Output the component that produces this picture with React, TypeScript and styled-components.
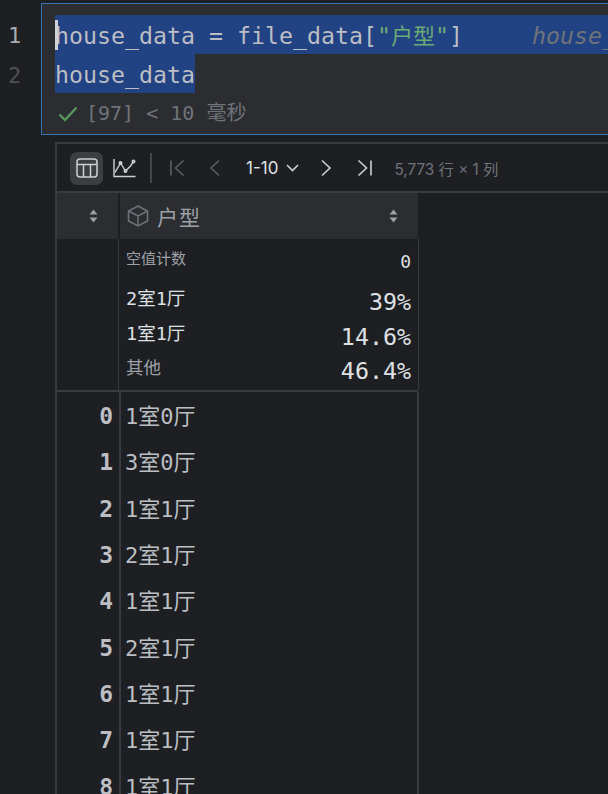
import * as React from 'react';
import styled, { createGlobalStyle } from 'styled-components';

const MONO = `"DejaVu Sans Mono", "Noto Sans CJK SC", monospace`;
const UI = `Inter, "Noto Sans CJK SC", sans-serif`;

const GlobalStyle = createGlobalStyle`
  html, body {
    margin: 0;
    height: 794px;
    overflow: hidden;
    background: #1e1f22;
  }
`;

const Page = styled.div`
  width: 608px;
  height: 794px;
  overflow: hidden;
  padding-top: 3px;
  box-sizing: border-box;
  background: #1e1f22;
`;

const CellRow = styled.div`
  display: flex;
  height: 132px;
`;

const Gutter = styled.div`
  width: 41px;
  padding-top: 13px;
  box-sizing: border-box;
`;

const LineNo = styled.div<{ $active?: boolean }>`
  height: 39.5px;
  padding-left: 8px;
  font: 22px/39px ${MONO};
  color: ${p => (p.$active ? '#a8abb2' : '#4e5157')};
`;

const Cell = styled.div`
  flex: 1;
  min-width: 0;
  background: #2b2d30;
  border: 1px solid #3574b0;
  border-right: none;
  padding-top: 11px;
  box-sizing: border-box;
  overflow: hidden;
`;

const CodeLine = styled.div<{ $fill?: boolean }>`
  position: relative;
  display: block;
  width: ${p => (p.$fill ? 'auto' : '140px')};
  height: 39px;
  margin-left: 13px;
  background: #214283;
  font: 23.25px/42px ${MONO};
  color: #bcbec4;
  white-space: pre;
`;

const Caret = styled.span`
  position: absolute;
  left: 0;
  top: 5px;
  width: 3px;
  height: 30px;
  background: #ced0d6;
`;

const Str = styled.span`
  color: #6aab73;
`;

const Cjk = styled.span`
  font-size: 22px;
`;

const Hint = styled.span`
  margin-left: 69px;
  color: #6f737a;
  font-style: italic;
`;

const Status = styled.div`
  display: flex;
  align-items: center;
  height: 39px;
  padding: 2px 0 0 16px;
  box-sizing: border-box;
  gap: 8px;
  font: 20px/41px ${MONO};
  color: #6f737a;
  white-space: pre;
`;

const Output = styled.div`
  margin: 7px 0 0 55px;
  height: 652px;
  border-left: 2px solid #393b40;
  overflow: hidden;
`;

const Toolbar = styled.div`
  display: flex;
  align-items: center;
  height: 46px;
  padding: 1px 0 0 13px;
  border-top: 2px solid #393b40;
  border-bottom: 2px solid #393b40;
`;

const ToolButton = styled.div<{ $active?: boolean; $ml?: number; $w?: number }>`
  display: flex;
  align-items: center;
  justify-content: center;
  flex: none;
  width: ${p => p.$w ?? 33}px;
  height: 33px;
  margin-left: ${p => p.$ml ?? 0}px;
  border-radius: 7px;
  background: ${p => (p.$active ? '#3c3e41' : 'transparent')};
`;

const Divider = styled.div`
  width: 2px;
  height: 30px;
  margin-left: 9px;
  background: #43454a;
`;

const PageLabel = styled.span`
  margin-left: 15px;
  font: 17px ${UI};
  color: #dfe1e5;
`;

const RowCount = styled.span`
  margin-left: 13px;
  font: 15.3px ${UI};
  color: #6f737a;
  white-space: pre;
`;

const TableWrap = styled.div`
  width: 361px;
`;

const HeaderRow = styled.div`
  display: flex;
  justify-content: space-between;
  height: 46px;
`;

const IndexHead = styled.div`
  display: flex;
  align-items: center;
  justify-content: center;
  width: 61px;
  flex: none;
  padding-left: 11px;
  box-sizing: border-box;
  background: #2b2d30;
`;

const ColumnHead = styled.div`
  display: flex;
  align-items: center;
  width: 298px;
  flex: none;
  padding: 0 20px 0 7px;
  box-sizing: border-box;
  background: #2b2d30;
`;

const ColumnName = styled.span`
  flex: 1;
  margin-left: 8px;
  font: 21px/46px "Noto Sans CJK SC", sans-serif;
  letter-spacing: 1px;
  color: #9da0a8;
`;

const StatsRow = styled.div`
  display: flex;
  height: 153px;
  border-bottom: 2px solid #393b40;
  box-sizing: border-box;
`;

const StatsIndex = styled.div`
  width: 61px;
  flex: none;
  border-right: 1px solid #393b40;
`;

const StatsBody = styled.div`
  width: 299px;
  flex: none;
  margin-left: 1px;
  padding: 6px 7px 0 6px;
  box-sizing: border-box;
  border-right: 1px solid #393b40;
`;

const StatLine = styled.div<{ $h: number }>`
  display: flex;
  justify-content: space-between;
  align-items: center;
  height: ${p => p.$h}px;
`;

// $dy nudges a text up or down inside its centred line
const StatName = styled.span<{ $muted?: boolean; $size: number; $dy: number }>`
  margin-top: ${p => p.$dy * 2}px;
  font: ${p => p.$size}px ${MONO};
  color: ${p => (p.$muted ? '#9da0a8' : '#dfe1e5')};
`;

const StatValue = styled.span<{ $size: number; $dy: number }>`
  margin-top: ${p => p.$dy * 2}px;
  font: ${p => p.$size}px ${MONO};
  color: #dfe1e5;
`;

const DataRow = styled.div`
  display: flex;
  height: 46.33px;
`;

const IndexCell = styled.div`
  width: 56px;
  padding-right: 6px;
  flex: none;
  text-align: right;
  font: bold 23px/48px ${MONO};
  color: #bcbec4;
`;

const ValueCell = styled.div`
  width: 300px;
  flex: none;
  padding-left: 4px;
  box-sizing: border-box;
  border-left: 2px solid #393b40;
  border-right: 2px solid #393b40;
  font: 22px/49px ${MONO};
  color: #bcbec4;
`;

const SortIcon = () => (
  <svg width="9" height="14" viewBox="0 0 9 14">
    <path d="M4.5 0.5 L8.5 5.5 H0.5 Z" fill="#9da0a8" />
    <path d="M4.5 13.5 L8.5 8.5 H0.5 Z" fill="#9da0a8" />
  </svg>
);

const Stroke = ({ w, h, d, color = '#9da0a8', sw = 1.6 }: { w: number; h: number; d: string; color?: string; sw?: number }) => (
  <svg width={w} height={h} viewBox={`0 0 ${w} ${h}`} fill="none" stroke={color} strokeWidth={sw}>
    <path d={d} />
  </svg>
);

const rows = ['1室0厅', '3室0厅', '1室1厅', '2室1厅', '1室1厅', '2室1厅', '1室1厅', '1室1厅', '1室1厅'];

export default function App() {
  return (
    <Page>
      <GlobalStyle />
      <CellRow>
        <Gutter>
          <LineNo $active>1</LineNo>
          <LineNo>2</LineNo>
        </Gutter>
        <Cell>
          <CodeLine $fill>
            <Caret />
            house_data = file_data[<Str>"<Cjk>户型</Cjk>"</Str>]<Hint>house_data</Hint>
          </CodeLine>
          <CodeLine>house_data</CodeLine>
          <Status>
            <Stroke w={20} h={18} d="M1.5 9.5 L7 15 L18.5 2.5" color="#57965c" sw={2.4} />
            <span>[97] &lt; 10 毫秒</span>
          </Status>
        </Cell>
      </CellRow>
      <Output>
        <Toolbar>
          <ToolButton $active>
            <svg width="22" height="20" viewBox="0 0 22 20" fill="none" stroke="#ced0d6" strokeWidth="1.5">
              <rect x="1" y="1" width="20" height="18" rx="3" />
              <path d="M1 6.5 H21 M7.5 6.5 V19 M14.5 6.5 V19" />
            </svg>
          </ToolButton>
          <ToolButton $ml={5}>
            <svg width="23" height="20" viewBox="0 0 23 20" fill="none" stroke="#ced0d6" strokeWidth="1.4">
              <path d="M1 1 V18.5 H22.5" />
              <path d="M2 14.5 L7.5 5 L12.5 13 L17.5 8 L20.5 3.5" />
              <circle cx="7.5" cy="5" r="1.3" />
              <circle cx="12.5" cy="13" r="1.3" />
              <circle cx="20.5" cy="3.5" r="1.3" />
            </svg>
          </ToolButton>
          <Divider />
          <ToolButton $ml={8}>
            <Stroke w={16} h={18} d="M2 1.5 V16.5 M14.5 1.5 L6.5 9 L14.5 16.5" color="#5a5d63" />
          </ToolButton>
          <ToolButton $ml={5}>
            <Stroke w={12} h={18} d="M10 1.5 L2 9 L10 16.5" color="#5a5d63" />
          </ToolButton>
          <PageLabel>1-10</PageLabel>
          <ToolButton $w={14} $ml={7.5}>
            <Stroke w={13} h={8} d="M1 1 L6.5 6.5 L12 1" color="#ced0d6" />
          </ToolButton>
          <ToolButton $ml={10}>
            <Stroke w={12} h={18} d="M2 1.5 L10 9 L2 16.5" color="#ced0d6" />
          </ToolButton>
          <ToolButton $ml={5.5}>
            <Stroke w={16} h={18} d="M14 1.5 V16.5 M1.5 1.5 L9.5 9 L1.5 16.5" color="#ced0d6" />
          </ToolButton>
          <RowCount>5,773 行 × 1 列</RowCount>
        </Toolbar>
        <TableWrap>
          <HeaderRow>
            <IndexHead>
              <SortIcon />
            </IndexHead>
            <ColumnHead>
              <svg width="22" height="22" viewBox="0 0 22 22" fill="none" stroke="#6f737a" strokeWidth="1.5">
                <path d="M11 1 L20.5 6 V16 L11 21 L1.5 16 V6 Z M1.5 6 L11 11 L20.5 6 M11 11 V21" />
              </svg>
              <ColumnName>户型</ColumnName>
              <SortIcon />
            </ColumnHead>
          </HeaderRow>
          <StatsRow>
            <StatsIndex />
            <StatsBody>
              <StatLine $h={32}>
                <StatName $muted $size={15} $dy={-4}>空值计数</StatName>
                <StatValue $size={18} $dy={0}>0</StatValue>
              </StatLine>
              <StatLine $h={37}>
                <StatName $size={18.5} $dy={1.5}>2室1厅</StatName>
                <StatValue $size={23.3} $dy={5.5}>39%</StatValue>
              </StatLine>
              <StatLine $h={34}>
                <StatName $size={18.5} $dy={1}>1室1厅</StatName>
                <StatValue $size={23.3} $dy={5}>14.6%</StatValue>
              </StatLine>
              <StatLine $h={34}>
                <StatName $muted $size={17.5} $dy={1.5}>其他</StatName>
                <StatValue $size={23.3} $dy={5.5}>46.4%</StatValue>
              </StatLine>
            </StatsBody>
          </StatsRow>
          {rows.map((value, i) => (
            <DataRow key={i}>
              <IndexCell>{i}</IndexCell>
              <ValueCell>{value}</ValueCell>
            </DataRow>
          ))}
        </TableWrap>
      </Output>
    </Page>
  );
}
